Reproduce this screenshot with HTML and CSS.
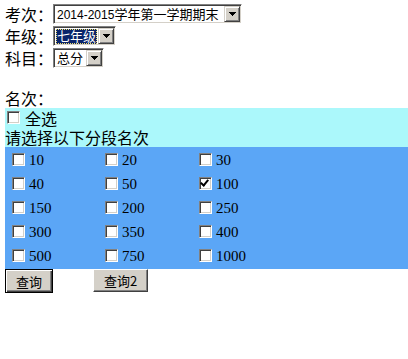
FILE: index.html
```html
<!DOCTYPE html>
<html lang="zh-CN">
<head>
    <meta charset="UTF-8">
    <title>名次查询</title>
    <link rel="stylesheet" href="styles.css">
</head>
<body>
    <form id="rank-form">
        <div class="field">
            <span class="label">考次：</span>
            <span class="combo exam"><span class="value"><span class="num">2014-2015</span>学年第一学期期末</span><span class="arrow"><svg width="7" height="4"><path d="M0 0h7v1h-1v1h-1v1h-1v1h-1v-1h-1v-1h-1v-1h-1z"/></svg></span></span>
        </div>
        <div class="field">
            <span class="label">年级：</span>
            <span class="combo grade"><span class="value selected">七年级</span><span class="arrow"><svg width="7" height="4"><path d="M0 0h7v1h-1v1h-1v1h-1v1h-1v-1h-1v-1h-1v-1h-1z"/></svg></span></span>
        </div>
        <div class="field">
            <span class="label">科目：</span>
            <span class="combo subject"><span class="value">总分</span><span class="arrow"><svg width="7" height="4"><path d="M0 0h7v1h-1v1h-1v1h-1v1h-1v-1h-1v-1h-1v-1h-1z"/></svg></span></span>
        </div>
        <div class="blank"></div>
        <div class="caption">名次：</div>

        <div class="select-all">
            <label class="all-row"><input type="checkbox" class="check"> 全选</label>
            <div class="hint">请选择以下分段名次</div>
        </div>

        <div class="ranks">
            <label class="rank"><input type="checkbox" class="check"><span>10</span></label>
            <label class="rank"><input type="checkbox" class="check"><span>20</span></label>
            <label class="rank"><input type="checkbox" class="check"><span>30</span></label>
            <label class="rank"><input type="checkbox" class="check"><span>40</span></label>
            <label class="rank"><input type="checkbox" class="check"><span>50</span></label>
            <label class="rank"><input type="checkbox" class="check" checked><span>100</span></label>
            <label class="rank"><input type="checkbox" class="check"><span>150</span></label>
            <label class="rank"><input type="checkbox" class="check"><span>200</span></label>
            <label class="rank"><input type="checkbox" class="check"><span>250</span></label>
            <label class="rank"><input type="checkbox" class="check"><span>300</span></label>
            <label class="rank"><input type="checkbox" class="check"><span>350</span></label>
            <label class="rank"><input type="checkbox" class="check"><span>400</span></label>
            <label class="rank"><input type="checkbox" class="check"><span>500</span></label>
            <label class="rank"><input type="checkbox" class="check"><span>750</span></label>
            <label class="rank"><input type="checkbox" class="check"><span>1000</span></label>
        </div>

        <div class="buttons">
            <button type="button" class="btn default">查询</button>
            <button type="button" class="btn second">查询2</button>
        </div>
    </form>
</body>
</html>
```

FILE: styles.css
```css
body { margin: 3px 0 0 5px; font-family: "Liberation Serif", "Noto Sans CJK SC", serif; font-size: 16px; color: #000; background: #fff; }
form { margin: 0; }

.field { display: flex; align-items: center; height: 22px; }
.label { font-family: "Noto Sans CJK SC", sans-serif; font-size: 16px; line-height: 22px; width: 48px; }

.combo { display: inline-flex; align-items: center; box-sizing: border-box; height: 20px; background: #fff; border: 1px solid; border-color: #808080 #fff #fff #808080; box-shadow: inset 1px 1px #404040, inset -1px -1px #d4d0c8; padding: 2px 2px 2px 3px; font-family: "Liberation Sans", "Noto Sans CJK SC", sans-serif; font-size: 13px; }
.combo.exam { width: 189px; }
.combo.grade { width: 63px; }
.combo.subject { width: 51px; }
.value { flex: 1; line-height: 15px; height: 15px; white-space: nowrap; }
.num { font-size: 12px; }
.value.selected { flex: none; background: #0a246a; color: #fff; outline: 1px dotted #f0e070; outline-offset: -1px; padding: 0 1px; margin-left: -1px; margin-right: 1px; }
.arrow { display: flex; align-items: center; justify-content: center; box-sizing: border-box; width: 16px; height: 16px; margin-right: -1px; background: #d4d0c8; border: 1px solid; border-color: #d4d0c8 #404040 #404040 #d4d0c8; box-shadow: inset 1px 1px #fff, inset -1px -1px #808080; }
.arrow svg { display: block; fill: #000; }

.blank { height: 19px; }
.caption { font-family: "Noto Sans CJK SC", sans-serif; line-height: 20px; height: 20px; }

.check { appearance: none; -webkit-appearance: none; box-sizing: border-box; width: 13px; height: 13px; margin: 0; background: #fff; border: 1px solid; border-color: #808080 #fff #fff #808080; box-shadow: inset 1px 1px #404040, inset -1px -1px #d4d0c8; position: relative; flex: none; }
.check:checked::after { content: ""; position: absolute; left: 2px; top: 0px; width: 3px; height: 6px; border: solid #000; border-width: 0 2px 2px 0; transform: rotate(40deg); }

.select-all { background: #abf8fb; font-family: "Noto Sans CJK SC", sans-serif; }
.all-row { display: flex; align-items: center; height: 20px; padding-left: 2px; }
.all-row .check { margin-right: 5px; margin-top: -2px; }
.hint { line-height: 19px; height: 19px; }

.ranks { display: grid; grid-template-columns: 93px 94px auto; grid-auto-rows: 24px; background: #5ba6f6; padding: 1px 0 1px 7px; }
.rank { display: flex; align-items: center; font-family: "Liberation Serif", serif; font-size: 15px; }
.rank .check { margin-right: 4px; margin-top: -1px; }

.buttons { display: flex; align-items: flex-start; }
.btn { box-sizing: border-box; background: #d4d0c8; font-family: "Noto Sans CJK SC", "Liberation Sans", sans-serif; font-size: 13px; color: #000; padding: 0; line-height: 17px; border: 1px solid; }
.btn.default { width: 48px; height: 24px; border-color: #000; box-shadow: inset 1px 1px #fff, inset -1px -1px #404040, inset -2px -2px #808080; }
.btn.second { width: 55px; height: 23px; margin-left: 40px; border-color: #fff #404040 #404040 #fff; box-shadow: inset -1px -1px #808080; }
```
